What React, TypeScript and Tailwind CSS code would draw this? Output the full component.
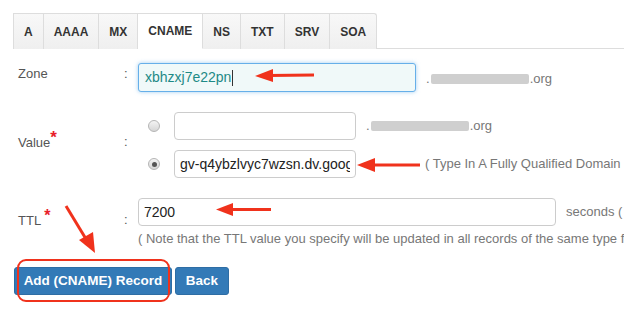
import React from 'react';

const tabs = ['A', 'AAAA', 'MX', 'CNAME', 'NS', 'TXT', 'SRV', 'SOA'];
const red = '#f0321c';

function Blurred({ width }: { width: number }) {
  return (
    <span className="inline-flex items-center whitespace-nowrap text-[13px] text-[#777]">
      .
      <span className="mx-[1px] inline-block h-[10px] rounded-[2px] bg-[#cfcfcf]" style={{ width }} />
      .org
    </span>
  );
}

function Radio({ checked }: { checked?: boolean }) {
  return (
    <span className="ml-[10px] flex h-[12px] w-[12px] items-center justify-center rounded-full border border-[#b5b5b5] bg-gradient-to-b from-[#f4f4f4] to-[#d6d6d6]">
      {checked && <span className="h-[5px] w-[5px] rounded-full bg-[#555]" />}
    </span>
  );
}

function Arrows() {
  return (
    <svg className="pointer-events-none absolute left-0 top-0" width="624" height="315">
      {/* zone */}
      <line x1="314" y1="75" x2="268" y2="75.5" stroke={red} strokeWidth="3" />
      <polygon points="255,76 273,69 273,82" fill={red} />
      {/* value */}
      <line x1="420" y1="165" x2="370" y2="165" stroke={red} strokeWidth="3" />
      <polygon points="357,165 375,158 375,172" fill={red} />
      {/* ttl */}
      <line x1="271" y1="209.5" x2="230" y2="209.5" stroke={red} strokeWidth="3" />
      <polygon points="216,209.5 233,203 233,216" fill={red} />
      {/* diagonal */}
      <line x1="66" y1="206" x2="86" y2="239" stroke={red} strokeWidth="3" />
      <polygon points="95,253 79,240 93,232" fill={red} />
      {/* button highlight */}
      <rect x="18" y="260" width="151" height="41" rx="8" fill="none" stroke={red} strokeWidth="2" />
    </svg>
  );
}

export default function App() {
  return (
    <div className="relative h-[315px] w-[624px] overflow-hidden bg-white pt-[13px] font-['Liberation_Sans',Arial,sans-serif] text-[#555]">
      {/* Tabs */}
      <div className="ml-[13px] flex h-[36px] border-b border-[#ddd]">
        {tabs.map((t, i) => (
          <div
            key={t}
            className={`flex h-[36px] items-center border-t border-r border-[#ddd] px-[10px] text-[12px] font-bold text-[#333] ${
              i === 0 ? 'border-l' : ''
            } ${t === 'CNAME' ? 'border-b border-b-white bg-white' : 'bg-gradient-to-b from-[#f8f8f8] to-[#efefef]'} ${
              t === 'SOA' ? 'rounded-tr-[3px]' : ''
            }`}
          >
            {t}
          </div>
        ))}
      </div>

      {/* Form */}
      <div className="mt-[14px] pl-[18px] text-[13px]">
        {/* Zone */}
        <div className="flex items-start">
          <div className="mt-[1px] w-[106px] shrink-0 leading-[20px]">Zone</div>
          <div className="mt-[1px] w-[14px] shrink-0 leading-[20px]">:</div>
          <div className="flex h-[29px] w-[278px] shrink-0 items-center rounded-[3px] border border-[#66afe9] bg-[#f0f9f9] px-[6px] text-[14px] text-[#1e8a86] shadow-[0_0_4px_rgba(102,175,233,0.6)]">
            xbhzxj7e22pn
            <span className="ml-[1px] h-[16px] w-[1px] bg-[#333]" />
          </div>
          <div className="ml-[10px] mt-[6px] shrink-0">
            <Blurred width={98} />
          </div>
        </div>

        {/* Value */}
        <div className="mt-[20px] flex items-center">
          <div className="mb-[6px] w-[106px] shrink-0 leading-[20px]">
            Value<span className="relative -top-[4px] text-[17px] font-bold text-[#e8202a]">*</span>
          </div>
          <div className="mb-[6px] w-[14px] shrink-0 leading-[20px]">:</div>
          <div className="flex shrink-0 flex-col gap-[10px]">
            <div className="flex items-center">
              <div className="w-[36px] shrink-0">
                <Radio />
              </div>
              <div className="h-[28px] w-[182px] shrink-0 rounded-[4px] border border-[#ccc] bg-white" />
              <div className="ml-[10px] shrink-0">
                <Blurred width={98} />
              </div>
            </div>
            <div className="flex items-center">
              <div className="w-[36px] shrink-0">
                <Radio checked />
              </div>
              <div className="flex h-[28px] w-[182px] shrink-0 items-center rounded-[4px] border border-[#ccc] bg-white px-[5px] text-[14px] text-[#222]">
                <div className="overflow-hidden whitespace-nowrap">gv-q4ybzlvyc7wzsn.dv.googlehosted.com</div>
              </div>
              <div className="ml-[69px] shrink-0 whitespace-nowrap text-[#777]">( Type In A Fully Qualified Domain Name )</div>
            </div>
          </div>
        </div>

        {/* TTL */}
        <div className="mt-[20px] flex items-center">
          <div className="mb-[6px] w-[106px] shrink-0 leading-[20px]">
            TTL <span className="relative -top-[4px] text-[16px] font-bold text-[#e8202a]">*</span>
          </div>
          <div className="mb-[6px] w-[14px] shrink-0 leading-[20px]">:</div>
          <div className="flex shrink-0 flex-col">
            <div className="flex items-center">
              <div className="flex h-[28px] w-[418px] shrink-0 items-center rounded-[4px] border border-[#ccc] bg-white px-[5px] text-[14px] text-[#222]">
                7200
              </div>
              <div className="ml-[10px] shrink-0 whitespace-nowrap text-[#777]">seconds ( 300 - 86400 )</div>
            </div>
            <div className="mt-[4px] whitespace-nowrap leading-[18px] text-[#777]">
              ( Note that the TTL value you specify will be updated in all records of the same type for this zone )
            </div>
          </div>
        </div>
      </div>

      {/* Buttons */}
      <div className="ml-[14px] mt-[19px] flex gap-[3px]">
        <button className="h-[28px] w-[158px] rounded-[3px] border border-[#2e6da4] bg-[#337ab7] text-[13.5px] font-bold text-white">
          Add (CNAME) Record
        </button>
        <button className="h-[28px] w-[54px] rounded-[3px] border border-[#2e6da4] bg-[#337ab7] text-[13.5px] font-bold text-white">
          Back
        </button>
      </div>

      <Arrows />
    </div>
  );
}
